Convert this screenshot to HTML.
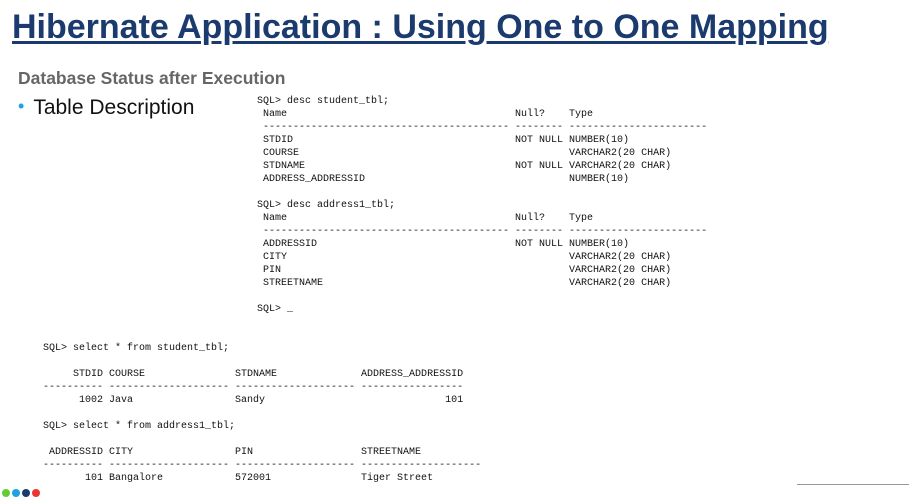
<!DOCTYPE html>
<html><head><meta charset="utf-8"><style>
body{margin:0;width:909px;height:493px;background:#fff;position:relative;overflow:hidden;font-family:"Liberation Sans",sans-serif}
.t{position:absolute;left:12px;top:8px;font-size:34px;font-weight:bold;color:#1b3a6e;white-space:nowrap;text-decoration:underline;text-decoration-thickness:3px;text-underline-offset:3px}
.s{position:absolute;left:18px;top:68px;font-size:17.5px;font-weight:bold;color:#666}
.b{position:absolute;left:18px;top:96px;font-size:21px;color:#111}
.b span{color:#1aa3e0;font-size:18px;position:relative;top:-2px;margin-right:9px}
pre{position:absolute;margin:0;font-family:"Liberation Mono",monospace;font-size:10px;line-height:13px;color:#111}
</style></head><body>
<div class="t">Hibernate Application : Using One to One Mapping</div>
<div class="s">Database Status after Execution</div>
<div class="b"><span>•</span>Table Description</div>
<pre style="left:257px;top:95px">SQL&gt; desc student_tbl;
 Name                                      Null?    Type
 ----------------------------------------- -------- -----------------------
 STDID                                     NOT NULL NUMBER(10)
 COURSE                                             VARCHAR2(20 CHAR)
 STDNAME                                   NOT NULL VARCHAR2(20 CHAR)
 ADDRESS_ADDRESSID                                  NUMBER(10)

SQL&gt; desc address1_tbl;
 Name                                      Null?    Type
 ----------------------------------------- -------- -----------------------
 ADDRESSID                                 NOT NULL NUMBER(10)
 CITY                                               VARCHAR2(20 CHAR)
 PIN                                                VARCHAR2(20 CHAR)
 STREETNAME                                         VARCHAR2(20 CHAR)

SQL&gt; <b>_</b></pre>
<pre style="left:43px;top:342px;letter-spacing:0px">SQL&gt; select * from student_tbl;

     STDID COURSE               STDNAME              ADDRESS_ADDRESSID
---------- -------------------- -------------------- -----------------
      1002 Java                 Sandy                              101

SQL&gt; select * from address1_tbl;

 ADDRESSID CITY                 PIN                  STREETNAME
---------- -------------------- -------------------- --------------------
       101 Bangalore            572001               Tiger Street</pre>
<div style="position:absolute;left:797px;top:484px;width:112px;height:1px;background:#999"></div>
<div style="position:absolute;left:2px;top:489px;width:8px;height:8px;border-radius:50%;background:#6c3"></div>
<div style="position:absolute;left:12px;top:489px;width:8px;height:8px;border-radius:50%;background:#1aa3e0"></div>
<div style="position:absolute;left:22px;top:489px;width:8px;height:8px;border-radius:50%;background:#1b3a6e"></div>
<div style="position:absolute;left:32px;top:489px;width:8px;height:8px;border-radius:50%;background:#e33"></div>
</body></html>
